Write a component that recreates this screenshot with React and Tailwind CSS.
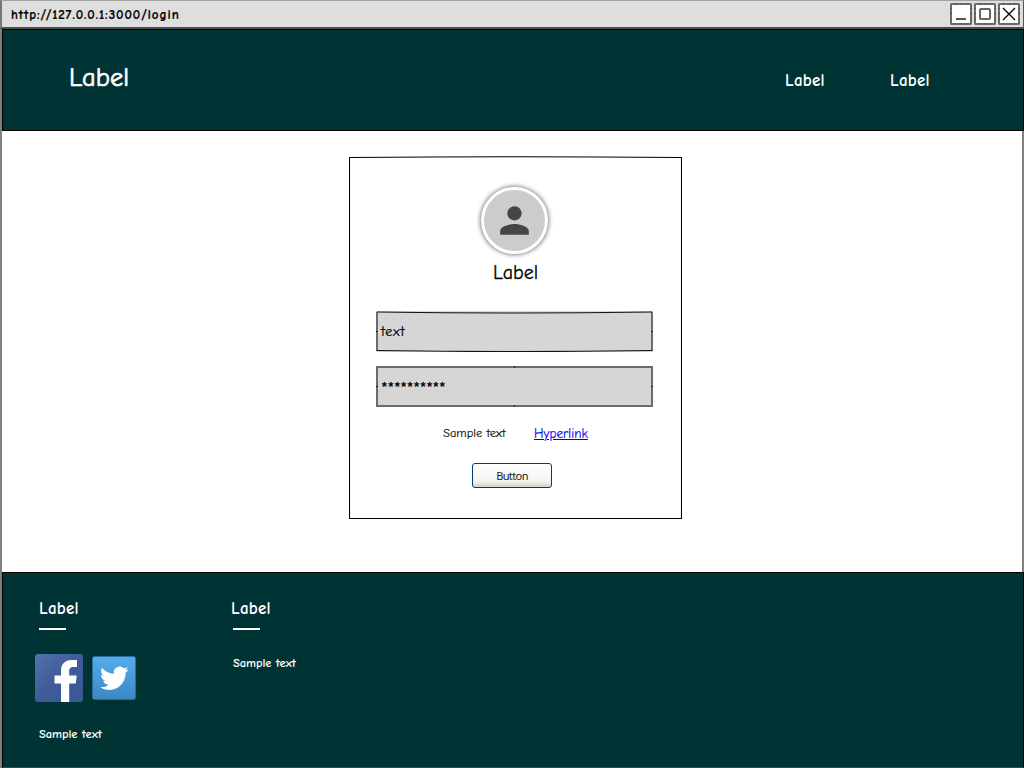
import React from "react";

const hand = "font-['Comic_Sans_MS','Comic_Neue',Lato,sans-serif]";

function WindowButton({ children }) {
  return (
    <svg className="block h-[22px] w-[22px]" viewBox="0 0 22 22" fill="none">
      <rect x="1" y="1" width="20" height="20" rx="0.5" fill="#fff" stroke="#6b6b6b" strokeWidth="2" />
      <path d="M5.5 0v2M11.5 0v2M16.5 0v2M5.5 20v2M11.5 20v2M16.5 20v2M0 5.5h2M0 10.5h2M0 16.5h2M20 5.5h2M20 10.5h2M20 16.5h2" stroke="#555" />
      {children}
    </svg>
  );
}

function TitleBar() {
  return (
    <div className="flex h-[29px] shrink-0 items-start justify-between border-t border-b-2 border-l-2 border-r border-t-[#a2a2a2] border-b-[#4d4d4d] border-l-[#777] border-r-[#555] bg-[#dedede] pl-[9px] pr-[3px]">
      <div className={`${hand} pt-[5px] text-[13px] leading-[18px] font-bold tracking-[0.94px] whitespace-nowrap text-black [-webkit-text-stroke:0.2px_black]`}>
        http://127.0.0.1:3000/login
      </div>
      <div className="flex gap-[2px] pt-[2px]">
        <WindowButton>
          <path d="M6 16h10" stroke="#555" strokeWidth="2" />
        </WindowButton>
        <WindowButton>
          <rect x="6" y="6" width="10" height="10" rx="1" stroke="#666" strokeWidth="2" />
        </WindowButton>
        <WindowButton>
          <path d="M5 5l12 12M17 5L5 17" stroke="#000" strokeWidth="1.3" />
        </WindowButton>
      </div>
    </div>
  );
}

function Field({ children, curved }) {
  return (
    <div className="relative h-[41px] w-[277px] bg-[#d6d6d6] pl-[5px]">
      <svg className="absolute inset-0 h-[41px] w-[277px]" viewBox="0 0 277 41" fill="none">
        <path d="M1 1V40M276 1V40" stroke="#6b6b6b" strokeWidth="2" />
        {curved ? (
          <path d="M1 1Q138 3 276 1M1 39.5Q138 41.5 276 39.5" stroke="#111" strokeWidth="1.2" />
        ) : (
          <path d="M0 1H277M0 40H277" stroke="#6b6b6b" strokeWidth="2" />
        )}
        <path d="M0 20.5h2M275 20.5h2" stroke="#222" />
        {!curved && <path d="M138.5 0v2M138.5 39v2" stroke="#222" />}
      </svg>
      {children}
    </div>
  );
}

function Avatar() {
  return (
    <div className="flex h-[67px] w-[67px] items-center justify-center rounded-full border-[3px] border-white bg-[#ccc] shadow-[0_0_4px_1px_rgba(0,0,0,0.5)]">
      <svg className="h-[43px] w-[43px]" viewBox="0 0 24 24" fill="#464646">
        <path d="M12 12c2.21 0 4-1.79 4-4s-1.79-4-4-4-4 1.79-4 4 1.790 4 4 4zm0 2c-2.670 0-8 1.340-8 4v2h16v-2c0-2.660-5.330-4-8-4z" />
      </svg>
    </div>
  );
}

function LoginCard() {
  return (
    <div className="relative mt-[25px] ml-[347px] flex h-[363px] w-[333px] flex-col">
      <svg className="absolute inset-0 h-[363px] w-[333px]" viewBox="0 0 333 363" fill="none" stroke="#000" strokeWidth="1.1">
        <path d="M0.500 1.500Q166 0 332.500 1.500Q333.300 180 332.500 362.500H0.500Q-0.300 180 0.500 1.500Z" />
      </svg>
      <div className="ml-[132px] pt-[31px]">
        <Avatar />
      </div>
      <div className={`${hand} ml-[144px] pt-[6px] text-[20px] leading-[25px] text-black [-webkit-text-stroke:0.3px_black]`}>Label</div>
      <div className="mt-[26px] ml-[27px] flex flex-col gap-[14px]">
        <Field curved>
          <div className={`${hand} pt-[12px] text-[14px] leading-[18px] tracking-[0.75px] text-black [-webkit-text-stroke:0.2px_black]`}>text</div>
        </Field>
        <Field>
          <div className={`${hand} pt-[14px] text-[17px] leading-[18px] tracking-[-0.25px] text-black [-webkit-text-stroke:0.3px_black]`}>**********</div>
        </Field>
      </div>
      <div className={`${hand} mt-[16px] ml-[94px] flex gap-[28px] whitespace-nowrap`}>
        <span className="w-[63px] text-[12.5px] leading-[20px] text-[#111] [-webkit-text-stroke:0.15px_#111]">Sample text</span>
        <a className="text-[13px] leading-[21px] tracking-[0.1px] text-[#0000ee] underline [-webkit-text-stroke:0.15px_#0000ee]">Hyperlink</a>
      </div>
      <button className="mt-[19px] ml-[123px] h-[25px] w-[80px] rounded-[3px] border border-[#003c74] bg-linear-to-b from-white via-[#f4f4f0] via-75% to-[#d6d0c5] font-['Noto_Sans',sans-serif] text-[11px] leading-[23px] tracking-[-0.6px] text-[#222]">
        Button
      </button>
    </div>
  );
}

function Facebook() {
  return (
    <svg className="h-[48px] w-[48px]" viewBox="0 0 48 48">
      <defs>
        <linearGradient id="fb" x1="0" y1="0" x2="1" y2="1">
          <stop offset="0" stopColor="#5470aa" />
          <stop offset="0.5" stopColor="#3f5c9a" />
          <stop offset="1" stopColor="#3a5795" />
        </linearGradient>
      </defs>
      <rect width="48" height="48" rx="3" fill="url(#fb)" />
      <path d="M26 48V29.500H19.500V21.500H26V17C26 10 30 6 36.500 6H42V13H38.500C35.200 13 34.200 14.600 34.200 17V21.500H41.700L40.800 29.500H34.200V48Z" fill="#fff" />
    </svg>
  );
}

function Twitter() {
  return (
    <svg className="h-[44px] w-[44px]" viewBox="0 0 44 44">
      <defs>
        <linearGradient id="tw" x1="0" y1="0" x2="0" y2="1">
          <stop offset="0" stopColor="#55acee" />
          <stop offset="1" stopColor="#3b88c3" />
        </linearGradient>
      </defs>
      <rect x="0.500" y="0.500" width="43" height="43" rx="2" fill="url(#tw)" stroke="#2c6f9f" strokeOpacity="0.8" />
      <path transform="translate(8 8) scale(1.190)" fill="#fff" d="M23.953 4.570a10 10 0 01-2.825.775 4.958 4.958 0 002.163-2.723c-.951.555-2.005.959-3.127 1.184a4.920 4.920 0 00-8.384 4.482C7.690 8.095 4.067 6.130 1.640 3.162a4.822 4.822 0 00-.666 2.475c0 1.710.870 3.213 2.188 4.096a4.904 4.904 0 01-2.228-.616v.060a4.923 4.923 0 003.946 4.827 4.996 4.996 0 01-2.212.085 4.936 4.936 0 004.604 3.417 9.867 9.867 0 01-6.102 2.105c-.390 0-.779-.023-1.170-.067a13.995 13.995 0 007.557 2.209c9.053 0 13.998-7.496 13.998-13.985 0-.210 0-.420-.015-.630A9.935 9.935 0 0024 4.590z" />
    </svg>
  );
}

function Heading({ children }) {
  return <div className="pl-px text-[17px] leading-[22px] font-bold tracking-[0.2px]">{children}</div>;
}

function Note({ children }) {
  return <div className="text-[12.5px] leading-[18px] font-bold tracking-[-0.05px] whitespace-nowrap">{children}</div>;
}

export default function App() {
  return (
    <div className="flex h-[768px] w-[1024px] flex-col overflow-hidden bg-white">
      <TitleBar />
      <div className="flex min-h-0 flex-1 flex-col border-l-2 border-[#808080]">
        <header className={`${hand} flex h-[102px] shrink-0 items-start border border-black bg-[#003333] text-white`}>
          <div className="ml-[66px] w-[715px] pt-[32px] text-[26.5px] leading-[32px] tracking-[0.1px] [-webkit-text-stroke:0.7px_white]">Label</div>
          <div className="w-[105px] pt-[40px]">
            <Heading>Label</Heading>
          </div>
          <div className="pt-[40px]">
            <Heading>Label</Heading>
          </div>
        </header>
        <main className="h-[441px] shrink-0 border-r-2 border-[#808080]">
          <LoginCard />
        </main>
        <footer className={`${hand} flex min-h-0 flex-1 items-start border border-b-[#444] border-black bg-[#003333] text-white`}>
          <section className="ml-[32px] w-[195px]">
            <div className="ml-[3px] pt-[25px]">
              <Heading>Label</Heading>
            </div>
            <div className="mt-[8px] ml-[4px] h-[2px] w-[27px] bg-white" />
            <div className="mt-[24px] flex items-center gap-[9px]">
              <Facebook />
              <Twitter />
            </div>
            <div className="mt-[23px] ml-[4px]">
              <Note>Sample text</Note>
            </div>
          </section>
          <section>
            <div className="pt-[25px]">
              <Heading>Label</Heading>
            </div>
            <div className="mt-[8px] ml-[3px] h-[2px] w-[27px] bg-white" />
            <div className="mt-[24px] ml-[3px]">
              <Note>Sample text</Note>
            </div>
          </section>
        </footer>
      </div>
    </div>
  );
}
